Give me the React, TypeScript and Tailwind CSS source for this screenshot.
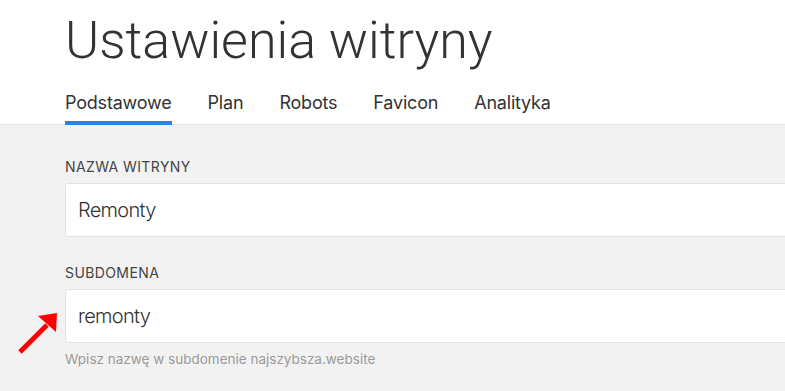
import React from 'react';

const tabs = ['Podstawowe', 'Plan', 'Robots', 'Favicon', 'Analityka'];

const Field: React.FC<{ label: string; value: string; className?: string }> = ({ label, value, className }) => (
  <div className={className}>
    <label className="block text-[14px] leading-[20px] uppercase tracking-[0.4px] text-[#444]">{label}</label>
    <input
      readOnly
      defaultValue={value}
      className="mt-[6px] block h-[54px] w-[calc(100%+20px)] rounded-[3px] border border-[#e3e3e3] bg-white pl-[12px] text-[20px] font-light tracking-[-0.7px] text-[#333] outline-none"
    />
  </div>
);

export default function App() {
  return (
    <div
      className="relative h-[391px] w-full overflow-hidden bg-[#f2f2f2]"
      style={{ fontFamily: 'Inter, Roboto, "Noto Sans", sans-serif' }}
    >
      {/* Header */}
      <div className="border-b border-[#e4e4e4] bg-white pl-[65px] pt-[15px]">
        <h1
          className="text-[52px] font-light leading-[52px] text-[#333]"
          style={{ fontFamily: 'Roboto, "Noto Sans", sans-serif' }}
        >
          Ustawienia witryny
        </h1>
        <nav className="mt-[24px] -mb-px flex gap-[36px]">
          {tabs.map((tab, i) => (
            <div
              key={tab}
              className={`border-b-4 pb-[6px] text-[18px] leading-[24px] tracking-[-0.2px] text-[#333] ${
                i === 0 ? 'border-[#1e88ee]' : 'border-transparent'
              }`}
            >
              {tab}
            </div>
          ))}
        </nav>
      </div>

      {/* Form */}
      <div className="pl-[65px] pt-[32px]">
        <Field label="Nazwa witryny" value="Remonty" />
        <Field label="Subdomena" value="remonty" className="mt-[26px]" />
        <p className="mt-[6px] text-[13.5px] leading-[20px] text-[#9a9a9a]">
          Wpisz nazwę w subdomenie najszybsza.website
        </p>
      </div>

      {/* Annotation arrow */}
      <svg className="absolute left-[10px] top-[305px] h-[55px] w-[60px]" viewBox="10 305 60 55">
        <line x1="20" y1="352" x2="47" y2="325" stroke="#ff0000" strokeWidth="5" />
        <polygon points="38,316 57,313 56,332" fill="#ff0000" />
      </svg>
    </div>
  );
}
